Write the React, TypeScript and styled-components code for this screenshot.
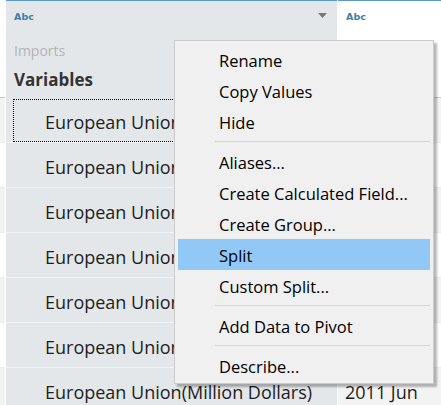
import React from "react";
import styled, { createGlobalStyle } from "styled-components";

const Global = createGlobalStyle`
  html, body { margin: 0; padding: 0; background: #fff; }
  body { width: 441px; height: 405px; overflow: hidden; font-family: "Open Sans", "Noto Sans", sans-serif; }
`;

const Page = styled.div`
  position: relative;
  width: 441px;
  height: 405px;
  overflow: hidden;
  display: grid;
  grid-template-columns: 5px 331px 105px;
  column-gap: 1px;
  align-items: start;
`;

const Column = styled.div<{ $bg: string; $top: boolean }>`
  display: flex;
  flex-direction: column;
  background: ${(p) => p.$bg};
  border-top: ${(p) => (p.$top ? "1px solid #5b9cc6" : "1px solid transparent")};
`;

const Header = styled.div<{ $line: string; $pad?: number }>`
  height: 96px;
  border-bottom: 1px solid ${(p) => p.$line};
  display: flex;
  flex-direction: column;
  padding: 0 ${(p) => (p.$pad ?? 8)}px;
  box-sizing: content-box;
`;

const TypeRow = styled.div`
  height: 30px;
  display: flex;
  align-items: center;
  justify-content: space-between;
`;

const TypeLabel = styled.span`
  font-family: "DejaVu Sans", sans-serif;
  font-size: 9.5px;
  font-weight: bold;
  color: #3d80a8;
  letter-spacing: 0.1px;
`;

const Caret = styled.svg`
  width: 9px;
  height: 6px;
  margin-right: 2px;
`;

const Source = styled.div`
  margin-top: 10px;
  font-size: 14px;
  color: #b4b4b4;
  line-height: 20px;
`;

const FieldName = styled.div`
  margin-top: 7px;
  font-size: 17px;
  font-weight: 700;
  color: #333;
  line-height: 24px;
`;

const Row = styled.div<{ $bg: string; $line: string }>`
  height: 44px;
  border-bottom: 1px solid ${(p) => p.$line};
  background: ${(p) => p.$bg};
  display: flex;
  align-items: center;
  position: relative;
  font-size: 18px;
  color: #1e1e1e;
  white-space: nowrap;
  overflow: hidden;
`;

const FocusRow = styled(Row)`
  &::after {
    content: "";
    position: absolute;
    left: 7px;
    right: -20px;
    top: 1px;
    bottom: 0px;
    border: 1px dotted #000;
  }
`;

const CellText = styled.span<{ $pad: number }>`
  padding-left: ${(p) => p.$pad}px;
  padding-top: 3px;
`;

const Menu = styled.div`
  position: absolute;
  left: 174px;
  top: 40px;
  width: 260px;
  box-sizing: border-box;
  background: #f0f0f0;
  border: 1px solid #cccccc;
  padding: 3px 3px 2px 3px;
  box-shadow: 3px 3px 2px rgba(0, 0, 0, 0.28);
  display: flex;
  flex-direction: column;
`;

const Item = styled.div<{ $active?: boolean }>`
  height: 31px;
  display: flex;
  align-items: center;
  padding-left: 41px;
  padding-top: 1px;
  box-sizing: border-box;
  font-size: 16.5px;
  color: #000;
  background: ${(p) => (p.$active ? "#91c8f6" : "transparent")};
  white-space: nowrap;
`;

const Sep = styled.div`
  height: 1px;
  margin: 4px 0 4px 37px;
  background: #d4d4d4;
`;

const rows = Array.from({ length: 7 });

export default function App() {
  return (
    <>
      <Global />
      <Page>
        <Column $bg="#fff" $top={false}>
          <Header $line="#c8c8c8" $pad={0} />
          {rows.map((_, i) => (
            <Row key={i} $bg={i % 2 === 0 ? "#f3f3f3" : "#ffffff"} $line="#ececec" />
          ))}
        </Column>
        <Column $bg="#e3e7ea" $top={true}>
          <Header $line="#e3e7ea">
            <TypeRow>
              <TypeLabel>Abc</TypeLabel>
              <Caret viewBox="0 0 9 6">
                <path d="M0 0 L9 0 L4.5 5 Z" fill="#777" />
              </Caret>
            </TypeRow>
            <Source>Imports</Source>
            <FieldName>Variables</FieldName>
          </Header>
          {rows.map((_, i) =>
            i === 0 ? (
              <FocusRow key={i} $bg="#e3e7ea" $line="#f1f3f4">
                <CellText $pad={39}>European Union(Million Dollars)</CellText>
              </FocusRow>
            ) : (
              <Row key={i} $bg="#e3e7ea" $line="#f1f3f4">
                <CellText $pad={39}>European Union(Million Dollars)</CellText>
              </Row>
            )
          )}
        </Column>
        <Column $bg="#fff" $top={true}>
          <Header $line="#c8c8c8">
            <TypeRow>
              <TypeLabel>Abc</TypeLabel>
            </TypeRow>
          </Header>
          {rows.map((_, i) => (
            <Row key={i} $bg={i % 2 === 0 ? "#f3f3f3" : "#ffffff"} $line="#ececec">
              <CellText $pad={7}>2011 Jun</CellText>
            </Row>
          ))}
        </Column>
        <Menu>
          <Item>Rename</Item>
          <Item>Copy Values</Item>
          <Item>Hide</Item>
          <Sep />
          <Item>Aliases...</Item>
          <Item>Create Calculated Field...</Item>
          <Item>Create Group...</Item>
          <Item $active>Split</Item>
          <Item>Custom Split...</Item>
          <Sep />
          <Item>Add Data to Pivot</Item>
          <Sep />
          <Item>Describe...</Item>
        </Menu>
      </Page>
    </>
  );
}
